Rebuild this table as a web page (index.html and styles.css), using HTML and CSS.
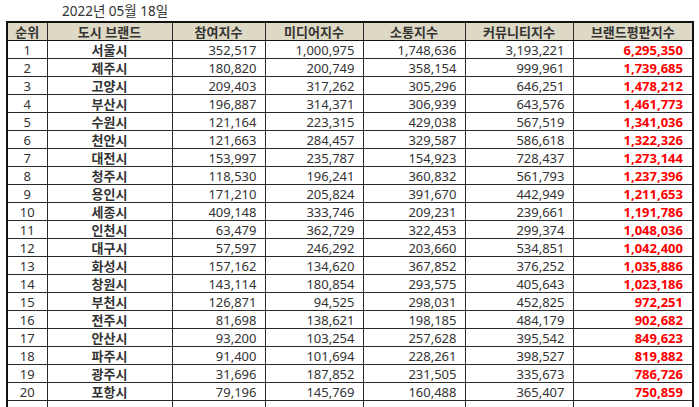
FILE: index.html
```html
<!DOCTYPE html>
<html lang="ko">
<head>
<meta charset="utf-8">
<title>도시 브랜드평판</title>
<link rel="stylesheet" href="styles.css">
</head>
<body>
<div class="page">
  <div class="date">2022년 05월 18일</div>
  <table class="rank">
    <colgroup>
      <col class="c-rank"><col class="c-city"><col class="c-a"><col class="c-b"><col class="c-c"><col class="c-d"><col class="c-e">
    </colgroup>
    <thead>
      <tr><th>순위</th><th>도시 브랜드</th><th>참여지수</th><th>미디어지수</th><th>소통지수</th><th>커뮤니티지수</th><th>브랜드평판지수</th></tr>
    </thead>
    <tbody>
      <tr><td class="no">1</td><td class="city">서울시</td><td>352,517</td><td>1,000,975</td><td>1,748,636</td><td>3,193,221</td><td class="total">6,295,350</td></tr>
      <tr><td class="no">2</td><td class="city">제주시</td><td>180,820</td><td>200,749</td><td>358,154</td><td>999,961</td><td class="total">1,739,685</td></tr>
      <tr><td class="no">3</td><td class="city">고양시</td><td>209,403</td><td>317,262</td><td>305,296</td><td>646,251</td><td class="total">1,478,212</td></tr>
      <tr><td class="no">4</td><td class="city">부산시</td><td>196,887</td><td>314,371</td><td>306,939</td><td>643,576</td><td class="total">1,461,773</td></tr>
      <tr><td class="no">5</td><td class="city">수원시</td><td>121,164</td><td>223,315</td><td>429,038</td><td>567,519</td><td class="total">1,341,036</td></tr>
      <tr><td class="no">6</td><td class="city">천안시</td><td>121,663</td><td>284,457</td><td>329,587</td><td>586,618</td><td class="total">1,322,326</td></tr>
      <tr><td class="no">7</td><td class="city">대전시</td><td>153,997</td><td>235,787</td><td>154,923</td><td>728,437</td><td class="total">1,273,144</td></tr>
      <tr><td class="no">8</td><td class="city">청주시</td><td>118,530</td><td>196,241</td><td>360,832</td><td>561,793</td><td class="total">1,237,396</td></tr>
      <tr><td class="no">9</td><td class="city">용인시</td><td>171,210</td><td>205,824</td><td>391,670</td><td>442,949</td><td class="total">1,211,653</td></tr>
      <tr><td class="no">10</td><td class="city">세종시</td><td>409,148</td><td>333,746</td><td>209,231</td><td>239,661</td><td class="total">1,191,786</td></tr>
      <tr><td class="no">11</td><td class="city">인천시</td><td>63,479</td><td>362,729</td><td>322,453</td><td>299,374</td><td class="total">1,048,036</td></tr>
      <tr><td class="no">12</td><td class="city">대구시</td><td>57,597</td><td>246,292</td><td>203,660</td><td>534,851</td><td class="total">1,042,400</td></tr>
      <tr><td class="no">13</td><td class="city">화성시</td><td>157,162</td><td>134,620</td><td>367,852</td><td>376,252</td><td class="total">1,035,886</td></tr>
      <tr><td class="no">14</td><td class="city">창원시</td><td>143,114</td><td>180,854</td><td>293,575</td><td>405,643</td><td class="total">1,023,186</td></tr>
      <tr><td class="no">15</td><td class="city">부천시</td><td>126,871</td><td>94,525</td><td>298,031</td><td>452,825</td><td class="total">972,251</td></tr>
      <tr><td class="no">16</td><td class="city">전주시</td><td>81,698</td><td>138,621</td><td>198,185</td><td>484,179</td><td class="total">902,682</td></tr>
      <tr><td class="no">17</td><td class="city">안산시</td><td>93,200</td><td>103,254</td><td>257,628</td><td>395,542</td><td class="total">849,623</td></tr>
      <tr><td class="no">18</td><td class="city">파주시</td><td>91,400</td><td>101,694</td><td>228,261</td><td>398,527</td><td class="total">819,882</td></tr>
      <tr><td class="no">19</td><td class="city">광주시</td><td>31,696</td><td>187,852</td><td>231,505</td><td>335,673</td><td class="total">786,726</td></tr>
      <tr><td class="no">20</td><td class="city">포항시</td><td>79,196</td><td>145,769</td><td>160,488</td><td>365,407</td><td class="total">750,859</td></tr>
      <tr class="cut"><td></td><td></td><td></td><td></td><td></td><td></td><td></td></tr>
    </tbody>
  </table>
</div>
</body>
</html>
```
FILE: styles.css
```css
html, body {
  margin: 0;
  padding: 0;
  background: #ffffff;
}
body {
  font-family: "Noto Sans", "Noto Sans CJK KR", sans-serif;
  font-size: 13px;
  color: #333333;
  overflow: hidden;
}
.page {
  padding: 3px 0 0 6px;
}
.date {
  padding-left: 56px;
  height: 18px;
  line-height: 16px;
  font-size: 13.5px;
  color: #333333;
}
.rank {
  border-collapse: collapse;
  table-layout: fixed;
  width: 686px;
  border: 2px solid #111111;
}
.c-rank { width: 40px; }
.c-city { width: 125px; }
.c-a { width: 93px; }
.c-b { width: 98px; }
.c-c { width: 102px; }
.c-d { width: 108px; }
.c-e { width: 120px; }
.rank th,
.rank td {
  border: 1px solid #2a2a2a;
  padding: 0 8px 0 4px;
  height: 17px;
  line-height: 16px;
  white-space: nowrap;
  overflow: hidden;
}
.rank th {
  background: #ddd9c4;
  color: #333333;
  font-family: "Noto Sans CJK KR", sans-serif;
  font-weight: 700;
  text-align: center;
  padding: 0;
  border-bottom: 1px solid #111111;
}
.rank td {
  text-align: right;
  color: #333333;
}
.rank td.no {
  text-align: center;
  padding: 0;
}
.rank td.city {
  text-align: center;
  font-family: "Noto Sans CJK KR", sans-serif;
  font-weight: 700;
  padding: 0;
}
.rank td.total {
  color: #ff0000;
  font-weight: 700;
  padding-right: 9px;
}
.rank tr.cut td {
  height: 17px;
}
```
